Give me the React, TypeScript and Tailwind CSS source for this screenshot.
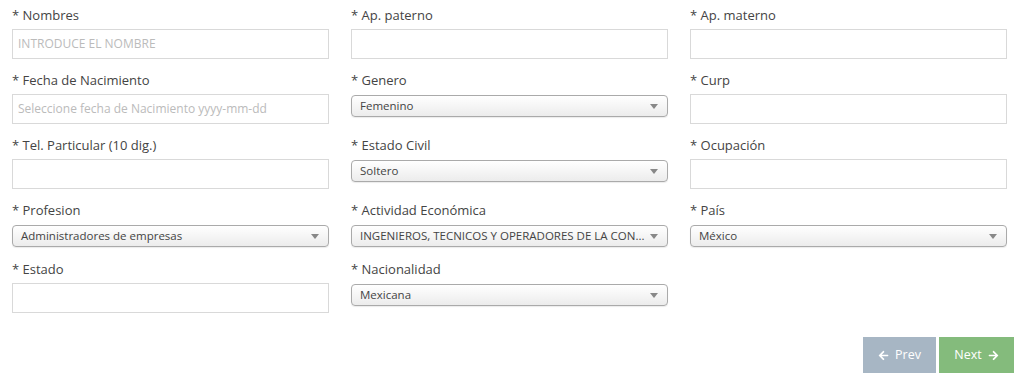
import React from "react";
import { FaArrowLeft, FaArrowRight } from "react-icons/fa";

type Field =
  | { label: string; kind: "input"; placeholder?: string }
  | { label: string; kind: "select"; value: string }
  | { label: string; kind: "empty" };

const rows: Field[][] = [
  [
    { label: "* Nombres", kind: "input", placeholder: "INTRODUCE EL NOMBRE" },
    { label: "* Ap. paterno", kind: "input" },
    { label: "* Ap. materno", kind: "input" },
  ],
  [
    { label: "* Fecha de Nacimiento", kind: "input", placeholder: "Seleccione fecha de Nacimiento yyyy-mm-dd" },
    { label: "* Genero", kind: "select", value: "Femenino" },
    { label: "* Curp", kind: "input" },
  ],
  [
    { label: "* Tel. Particular (10 dig.)", kind: "input" },
    { label: "* Estado Civil", kind: "select", value: "Soltero" },
    { label: "* Ocupación", kind: "input" },
  ],
  [
    { label: "* Profesion", kind: "select", value: "Administradores de empresas" },
    { label: "* Actividad Económica", kind: "select", value: "INGENIEROS, TECNICOS Y OPERADORES DE LA CON..." },
    { label: "* País", kind: "select", value: "México" },
  ],
  [
    { label: "* Estado", kind: "input" },
    { label: "* Nacionalidad", kind: "select", value: "Mexicana" },
    { label: "", kind: "empty" },
  ],
];

function Cell({ f }: { f: Field }) {
  if (f.kind === "empty") return <div />;
  return (
    <div className="flex flex-col">
      <div className="text-[13px] leading-[20px] text-[#444] mb-[4px]">{f.label}</div>
      {f.kind === "input" ? (
        <div className="h-[30px] border border-[#d9d9d9] bg-white flex items-center pl-[5px] text-[12px] text-[#bbb] whitespace-nowrap">
          {f.placeholder ?? ""}
        </div>
      ) : (
        <div className="mt-px h-[22px] border border-[#aaa] rounded-[4px] bg-gradient-to-b from-white to-[#ececec] flex items-center pl-[8px] pr-[9px] text-[11.5px] text-[#444] shadow-[0_1px_1px_rgba(0,0,0,0.08)]">
          <span className="flex-1 whitespace-nowrap">{f.value}</span>
          <svg width="8" height="5" viewBox="0 0 8 5" className="ml-1 shrink-0">
            <path d="M0 0 L8 0 L4 5 Z" fill="#888" />
          </svg>
        </div>
      )}
    </div>
  );
}

export default function App() {
  return (
    <div className="w-[1024px] h-[387px] bg-white pt-[5px] pl-[12px]" style={{ fontFamily: '"Open Sans", sans-serif' }}>
      <div className="flex flex-col gap-y-[11px]">
        {rows.map((r, i) => (
          <div key={i} className={`grid grid-cols-[317px_317px_317px] gap-x-[22px] items-start ${i === 4 ? "mt-px" : ""}`}>
            {r.map((f, j) => (
              <Cell key={j} f={f} />
            ))}
          </div>
        ))}
      </div>
      <div className="flex justify-end gap-[3px] pr-[10px] mt-[24px]">
        <button className="w-[73px] h-[36px] bg-[#a7b6c4] text-white text-[12.5px] flex items-center justify-center gap-[6px]">
          <FaArrowLeft className="w-[11px] h-[11px]" />
          Prev
        </button>
        <button className="w-[75px] h-[36px] bg-[#84bb7c] text-white text-[12.5px] flex items-center justify-center gap-[6px]">
          Next
          <FaArrowRight className="w-[11px] h-[11px]" />
        </button>
      </div>
    </div>
  );
}
